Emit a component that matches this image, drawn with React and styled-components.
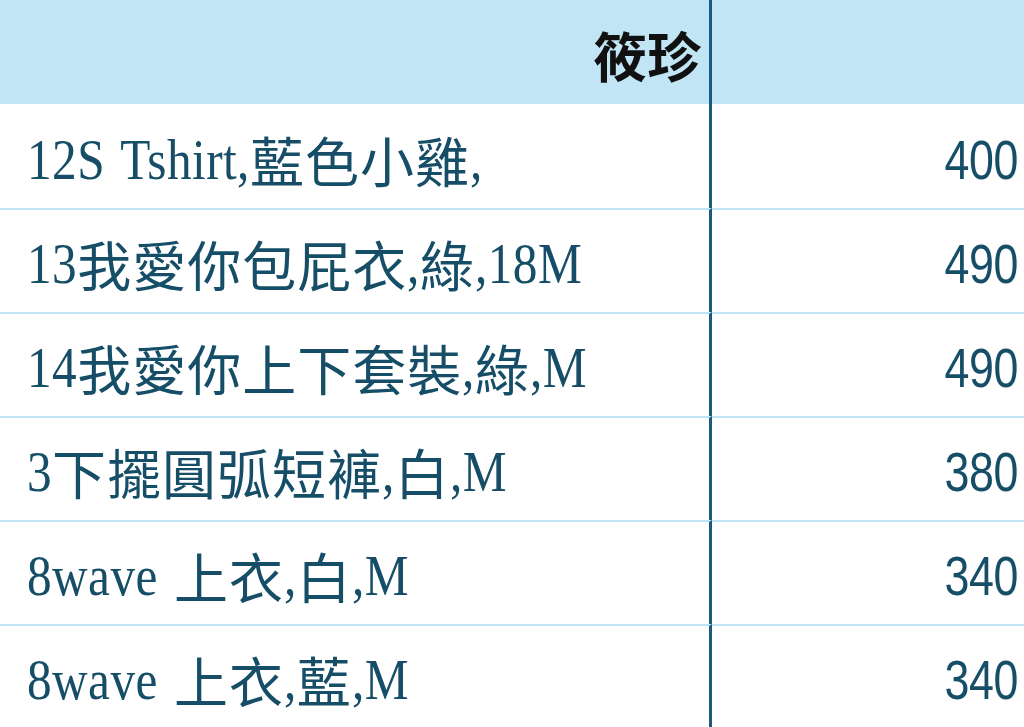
import React, { useLayoutEffect, useRef, useState } from "react";
import styled, { createGlobalStyle } from "styled-components";

const GlobalStyle = createGlobalStyle`
  html, body {
    margin: 0;
    padding: 0;
    background: #ffffff;
    overflow: hidden;
  }
  body {
    font-family: "Liberation Serif", "Noto Sans CJK TC", serif;
  }
`;

const SCALE = 0.85;

const Sheet = styled.div`
  width: 1024px;
  height: 727px;
  overflow: hidden;
  display: flex;
  flex-direction: column;
`;

const HeaderRow = styled.div`
  display: grid;
  grid-template-columns: 712px 1fr;
  height: 104px;
  flex: none;
  background: #c1e5f5;
`;

const HeadCell = styled.div`
  box-sizing: border-box;
  display: flex;
  align-items: center;
  justify-content: flex-end;
  padding-right: 8px;
  padding-top: 4px;
  border-right: ${(p) => (p.$divider ? "3px solid #1b5a7e" : "none")};
  font-family: "Noto Sans CJK TC", "Noto Sans CJK SC", sans-serif;
  font-weight: 700;
  font-size: 54px;
  color: #111111;
`;

const DataRow = styled.div`
  display: grid;
  grid-template-columns: 712px 1fr;
  height: 104px;
  flex: none;
  background: #ffffff;
`;

const NameCell = styled.div`
  box-sizing: border-box;
  display: flex;
  align-items: center;
  padding-left: 27px;
  padding-top: ${(p) => (p.$first ? "6px" : "4px")};
  border-right: 3px solid #1b5a7e;
  border-top: ${(p) => (p.$first ? "none" : "2px solid #bfe4f5")};
  color: #164e68;
  font-family: "Liberation Serif", "Noto Sans CJK TC", serif;
  font-size: 58px;
  white-space: nowrap;
  overflow: hidden;
`;

const PriceCell = styled.div`
  box-sizing: border-box;
  display: flex;
  align-items: center;
  justify-content: flex-end;
  padding-right: 6px;
  padding-top: ${(p) => (p.$first ? "6px" : "4px")};
  border-top: ${(p) => (p.$first ? "none" : "2px solid #bfe4f5")};
  color: #164e68;
  white-space: nowrap;
`;

const Amount = styled.span`
  display: inline-block;
  font-family: "Liberation Sans", Arial, sans-serif;
  font-size: 56px;
  letter-spacing: -0.5px;
  transform: scaleX(0.8);
  transform-origin: 100% 50%;
`;

const Han = styled.span`
  font-family: "Noto Sans CJK TC", "Noto Sans CJK SC", sans-serif;
  font-size: 54px;
  font-weight: 400;
  letter-spacing: 1px;
`;

const NarrowRun = styled.span`
  display: inline-block;
  white-space: pre;
  word-spacing: 4px;
  letter-spacing: 0.5px;
  transform: scaleX(${SCALE});
  transform-origin: 0 50%;
`;

function Narrow({ children }) {
  const ref = useRef(null);
  const [w, setW] = useState(0);
  useLayoutEffect(() => {
    const measure = () => {
      if (ref.current) setW(ref.current.offsetWidth);
    };
    measure();
    if (document.fonts && document.fonts.ready) {
      document.fonts.ready.then(measure);
    }
  }, [children]);
  return (
    <NarrowRun ref={ref} style={{ marginRight: -w * (1 - SCALE) }}>
      {children}
    </NarrowRun>
  );
}

const CJK = /([\u2e80-\u9fff\uf900-\ufaff]+)/;

function MixedText({ text }) {
  const parts = text.split(CJK).filter((s) => s.length > 0);
  return (
    <>
      {parts.map((part, i) =>
        CJK.test(part) ? (
          <Han key={i}>{part}</Han>
        ) : (
          <Narrow key={i}>{part}</Narrow>
        )
      )}
    </>
  );
}

const items = [
  { name: "12S Tshirt,藍色小雞,", price: 400 },
  { name: "13我愛你包屁衣,綠,18M", price: 490 },
  { name: "14我愛你上下套裝,綠,M", price: 490 },
  { name: "3下擺圓弧短褲,白,M", price: 380 },
  { name: "8wave 上衣,白,M", price: 340 },
  { name: "8wave 上衣,藍,M", price: 340 },
];

export default function App() {
  return (
    <>
      <GlobalStyle />
      <Sheet>
        <HeaderRow>
          <HeadCell $divider>筱珍</HeadCell>
          <HeadCell />
        </HeaderRow>
        {items.map((item, i) => (
          <DataRow key={i}>
            <NameCell $first={i === 0}>
              <MixedText text={item.name} />
            </NameCell>
            <PriceCell $first={i === 0}>
              <Amount>{item.price}</Amount>
            </PriceCell>
          </DataRow>
        ))}
      </Sheet>
    </>
  );
}
